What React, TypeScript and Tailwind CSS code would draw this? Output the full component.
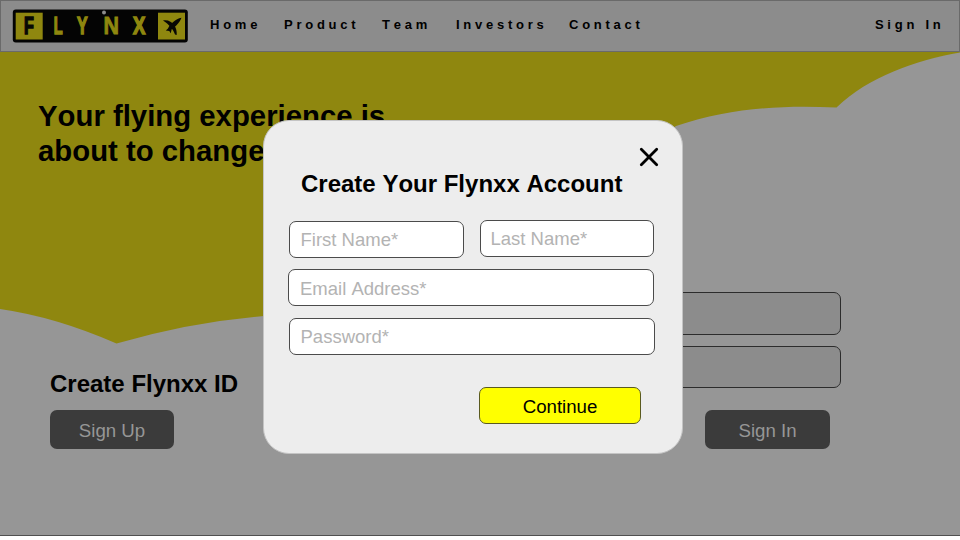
import type { ReactNode } from "react";

const logoLetters = [
  { ch: "F", x: 25.2, w: 8.2, fill: "#080804" },
  { ch: "L", x: 54.8, w: 7.4, fill: "#8f870f" },
  { ch: "Y", x: 77.3, w: 10.1, fill: "#8f870f" },
  { ch: "N", x: 104.9, w: 12.6, fill: "#8f870f" },
  { ch: "X", x: 133.3, w: 11.8, fill: "#8f870f" },
];

// Left bearing and ink width of each bold capital, in em.
const ink: Record<string, [number, number]> = {
  F: [0.067, 0.51],
  L: [0.067, 0.51],
  Y: [0.015, 0.637],
  N: [0.067, 0.587],
  X: [0.015, 0.637],
};

function Logo() {
  return (
    <svg width="200" height="51" viewBox="0 0 200 51" className="-mt-px -ml-px shrink-0" fontFamily="'Liberation Sans', Arial, sans-serif" fontWeight="700" fontSize="23">
      <rect x="12.8" y="9.6" width="175" height="32.8" rx="3" fill="#040404" />
      <rect x="15.7" y="12.7" width="27" height="26.8" fill="#8f870f" />
      <rect x="158" y="12.7" width="27" height="26.8" fill="#8f870f" />
      {logoLetters.map(({ ch, x, w, fill }) => {
        const k = w / (ink[ch][1] * 23);
        return (
          <text
            key={ch}
            fill={fill}
            stroke={fill}
            strokeWidth={ch === "N" ? 0.8 : 1.5}
            transform={`translate(${x - ink[ch][0] * 23 * k} 33.7) scale(${k} 1)`}
          >
            {ch}
          </text>
        );
      })}
      <circle cx="104" cy="12.6" r="2" fill="#8c8c8c" />
      <path d="M163 20.500C167 19.300 172 21.500 174.500 25.500C176.200 28.500 177 31.500 176.700 35L175 34.500C174 31.500 172.500 29.500 170.500 27C168.500 24.500 166 22.500 163 20.500Z" fill="#080804" />
      <path d="M181.500 17.800C180 22 176 26.500 171.800 29L170.700 33.300L169.300 31L165.800 30.600L168 28.600C170 24 175.500 19 181.500 17.800Z" fill="#080804" />
    </svg>
  );
}

function Field({ label, className }: { label: string; className: string }) {
  return (
    <input
      aria-label={label}
      placeholder={label}
      className={`h-[37px] rounded-[7px] border border-[#4b4b4b] bg-white text-[18.5px] leading-[22px] placeholder:text-[#b3b3b3] outline-none ${className}`}
    />
  );
}

function DarkButton({ children, className }: { children: ReactNode; className: string }) {
  return (
    <button className={`h-[39px] rounded-[7px] bg-[#3b3b3b] pt-[2px] text-[18.67px] leading-[37px] text-[#969696] ${className}`}>
      {children}
    </button>
  );
}

export default function App() {
  return (
    <div className="relative h-[540px] w-[960px] overflow-hidden bg-white font-['Liberation_Sans',Arial,sans-serif] text-black [font-kerning:none]">
      <div className="relative flex h-[536px] flex-col border-b border-[#505050] bg-[#969696]">
        <header className="flex h-[52px] shrink-0 border border-[#6a6a6a] bg-[#8c8c8c] text-[13px] leading-[16px] font-bold tracking-[3.75px]">
          <Logo />
          <nav className="mt-[16px] flex">
            <a className="ml-[10px] w-[74px]">Home</a>
            <a className="w-[98px]">Product</a>
            <a className="w-[74px]">Team</a>
            <a className="w-[113px]">Investors</a>
            <a>Contact</a>
          </nav>
          <a className="mt-[16px] mr-[14.500px] ml-auto">Sign In</a>
        </header>

        <svg width="960" height="300" viewBox="0 52 960 300" className="absolute top-[52px] left-0">
          <path d="M0 52H960V52.500C916 60 868 77 836.500 107.500C780 105 730 108 676 126L560 200L400 300L264 316Q190 322 116.500 343.500Q56 317 0 309Z" fill="#8f870f" />
        </svg>

        <h1 className="relative mt-[46px] ml-[38px] h-[70px] text-[29.33px] leading-[35px] font-bold">
          Your flying experience is
          <br />
          about to change
        </h1>

        <main className="relative mt-[124px] flex justify-between pr-[119px] pl-[50px]">
          <section className="pt-[77px]">
            <h2 className="h-[41px] text-[24px] leading-[29px] font-bold">Create Flynxx ID</h2>
            <DarkButton className="w-[124px]">Sign Up</DarkButton>
          </section>
          <section className="flex w-[300px] flex-col">
            <div className="h-[43px] rounded-[7px] border border-[#2c2c2c] bg-[#8c8c8c]" />
            <div className="mt-[11px] h-[42px] rounded-[7px] border border-[#2c2c2c] bg-[#8c8c8c]" />
            <DarkButton className="mt-[22px] ml-[164px] w-[125px]">Sign In</DarkButton>
          </section>
        </main>
      </div>

      <div role="dialog" className="absolute top-[120px] left-[263px] flex h-[334px] w-[420px] flex-col rounded-[26px] border border-[#c4c4c4] bg-[#ededed]">
        <button aria-label="Close" className="mt-[26px] ml-[375px] size-5">
          <svg width="20" height="20" viewBox="0 0 20 20">
            <path d="M2.300 2.300L17.700 17.700M17.700 2.300L2.300 17.700" stroke="#000" strokeWidth="2.800" strokeLinecap="round" />
          </svg>
        </button>
        <h2 className="mt-[2px] ml-[37px] text-[24px] leading-[29px] font-bold">Create Your Flynxx Account</h2>
        <div className="mt-[22px] ml-[25px] flex gap-4">
          <Field label="First Name*" className="mt-px w-[175px] pl-[10.500px]" />
          <Field label="Last Name*" className="w-[174px] pl-[9.500px]" />
        </div>
        <Field label="Email Address*" className="mt-[11px] ml-[24px] w-[366px] pt-[2px] pl-[11px]" />
        <Field label="Password*" className="mt-[12px] ml-[25px] w-[366px] pl-[10.500px]" />
        <button className="mt-[32px] ml-[215px] h-[37px] w-[162px] rounded-[7px] border border-[#5a5a20] bg-[#ffff00] pt-[2px] text-[18.67px] leading-[33px]">
          Continue
        </button>
      </div>
    </div>
  );
}
